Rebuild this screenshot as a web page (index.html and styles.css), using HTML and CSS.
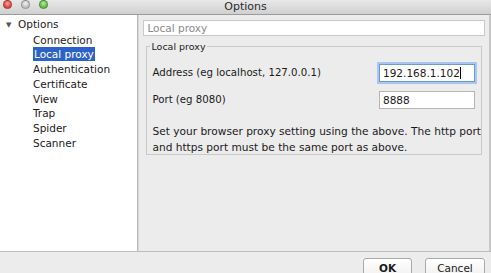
FILE: index.html
```html
<!DOCTYPE html>
<html lang="en">
<head>
    <meta charset="UTF-8">
    <title>Options</title>
    <link rel="stylesheet" href="styles.css">
</head>
<body>
    <div class="window">
        <header class="titlebar">
            <div class="lights">
                <span class="light red"></span>
                <span class="light grey"></span>
                <span class="light green"></span>
            </div>
            <div class="title">Options</div>
        </header>

        <div class="main">
            <ul class="tree">
                <li class="root"><span class="arrow">&#9660;</span>Options</li>
                <li class="child">Connection</li>
                <li class="child"><span class="selected">Local proxy</span></li>
                <li class="child">Authentication</li>
                <li class="child">Certificate</li>
                <li class="child">View</li>
                <li class="child">Trap</li>
                <li class="child">Spider</li>
                <li class="child">Scanner</li>
            </ul>

            <div class="content">
                <div class="panel-title">Local proxy</div>

                <fieldset class="group">
                    <legend>Local proxy</legend>
                    <div class="row">
                        <label for="address">Address (eg localhost, 127.0.0.1)</label>
                        <div class="field focused" id="address">192.168.1.102<span class="caret"></span></div>
                    </div>
                    <div class="row">
                        <label for="port">Port (eg 8080)</label>
                        <div class="field" id="port">8888</div>
                    </div>
                    <p class="note">Set your browser proxy setting using the above. The http port<br>and https port must be the same port as above.</p>
                </fieldset>
            </div>
        </div>

        <footer class="footer">
            <button class="btn ok">OK</button>
            <button class="btn cancel">Cancel</button>
        </footer>
    </div>
</body>
</html>
```

FILE: styles.css
```css
* {
    box-sizing: border-box;
    margin: 0;
    padding: 0;
}

body {
    font-family: 'DejaVu Sans', sans-serif;
    font-size: 10px;
    color: #1a1a1a;
    background-color: #ececec;
    width: 491px;
    height: 273px;
    overflow: hidden;
}

.window {
    display: flex;
    flex-direction: column;
    height: 273px;
}

/* title bar */
.titlebar {
    position: relative;
    height: 15px;
    background: linear-gradient(#e8e8e8, #d0d0d0);
    border-bottom: 1px solid #9b9b9b;
    display: flex;
    align-items: center;
    justify-content: center;
}

.lights {
    position: absolute;
    left: 3px;
    top: 0;
    display: flex;
    gap: 9px;
}

.light {
    width: 9px;
    height: 9px;
    border-radius: 50%;
    border: 1px solid rgba(0, 0, 0, 0.25);
}

.light.red {
    background: radial-gradient(circle at 50% 35%, #f6a09a, #d8423b 70%);
}

.light.grey {
    background: radial-gradient(circle at 50% 35%, #f2f2f2, #bdbdbd 70%);
}

.light.green {
    background: radial-gradient(circle at 50% 35%, #b9ec9e, #5ab743 70%);
}

.title {
    font-size: 11px;
    color: #2a2a2a;
    margin-top: -2px;
}

/* main area */
.main {
    flex: 1;
    display: flex;
    border-bottom: 1px solid #bdbdbd;
}

.tree {
    list-style: none;
    width: 144px;
    background: #fff;
    border-right: 1px solid #b8b8b8;
    box-shadow: 1px 0 0 #d8d8d8;
    padding-top: 2px;
    line-height: 14.7px;
    font-size: 10.5px;
}

.root {
    padding-left: 6px;
}

.arrow {
    display: inline-block;
    font-size: 7px;
    color: #555;
    width: 12px;
    vertical-align: 1px;
}

.child {
    padding-left: 33px;
}

.selected {
    background: #2d62c9;
    color: #fff;
    padding: 1px 1px;
}

.content {
    flex: 1;
    padding: 5px 4px 0 5px;
    border-right: 2px solid #c9c9c9;
}

.panel-title {
    height: 16px;
    background: #fff;
    border: 1px solid #c9c9c9;
    color: #8a8a8a;
    font-size: 10.5px;
    line-height: 14px;
    padding-left: 3px;
}

.group {
    margin: 5px 3px 0 3px;
    border: 1px solid #c9c9c9;
    padding: 5px 0 4px 5px;
    height: 114px;
}

.group legend {
    font-size: 9.5px;
    padding: 0 1px;
    margin-left: -2px;
}

.row {
    display: flex;
    align-items: center;
    justify-content: space-between;
    padding-right: 6px;
    height: 27px;
    font-size: 10.2px;
}

.row:first-of-type {
    margin-top: 2px;
}

.field {
    width: 96px;
    height: 18px;
    background: #fff;
    border: 1px solid #b5b5b5;
    line-height: 16px;
    padding-left: 3px;
    font-size: 10.5px;
}

.field.focused {
    border-color: #6c9ad8;
    box-shadow: 0 0 0 2px #a8c6ee;
}

.caret {
    display: inline-block;
    width: 1px;
    height: 12px;
    background: #000;
    vertical-align: -2px;
}

.note {
    margin-top: 10px;
    white-space: nowrap;
    line-height: 16px;
    font-size: 10.6px;
}

/* buttons */
.footer {
    height: 21px;
    display: flex;
    justify-content: flex-end;
    align-items: flex-start;
    gap: 13px;
    padding: 6px 6px 0 0;
}

.btn {
    font-family: 'DejaVu Sans', sans-serif;
    font-size: 10.5px;
    height: 20px;
    background: linear-gradient(#ffffff, #f0f0f0);
    border: 1px solid #a9a9a9;
    border-radius: 3px;
    color: #1a1a1a;
}

.btn.ok {
    width: 49px;
    font-weight: bold;
}

.btn.cancel {
    width: 60px;
}
```
